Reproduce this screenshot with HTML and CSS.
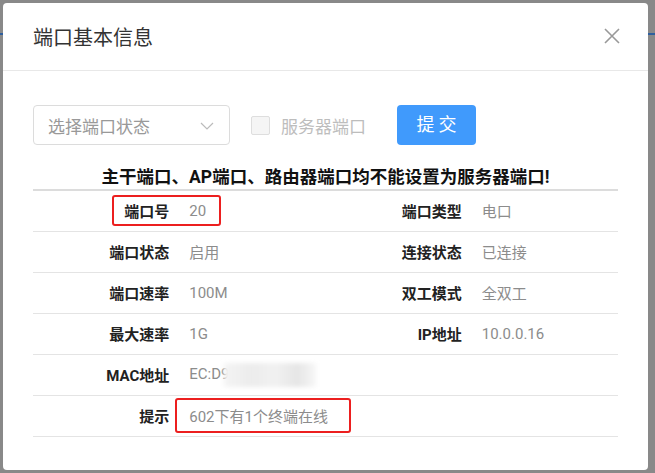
FILE: index.html
```html
<!doctype html>
<html lang="zh-CN">
<head>
    <meta charset="UTF-8">
    <title>端口基本信息</title>
    <link rel="stylesheet" href="styles.css">
</head>
<body>
<div class="page-bg">
    <span class="bg-line bg-line-l"></span>
    <span class="bg-line bg-line-r"></span>
</div>

<!--端口信息弹窗-->
<div class="modal">
    <div class="modal-head">
        <h3 class="modal-title">端口基本信息</h3>
        <a href="javascript:;" class="modal-close">
            <svg width="16" height="16" viewBox="0 0 16 16">
                <path d="M1 1L15 15M15 1L1 15" stroke="#999" stroke-width="1.6" fill="none"/>
            </svg>
        </a>
    </div>
    <div class="modal-body">
        <div class="toolbar">
            <div class="select">
                <span class="select-text">选择端口状态</span>
                <svg class="select-arrow" width="14" height="8" viewBox="0 0 14 8">
                    <path d="M1 1L7 7L13 1" stroke="#bbb" stroke-width="1.2" fill="none"/>
                </svg>
            </div>
            <label class="check disabled">
                <span class="check-box"></span>
                <span class="check-text">服务器端口</span>
            </label>
            <a href="javascript:;" class="btn-submit">提交</a>
        </div>

        <p class="warn">主干端口、AP端口、路由器端口均不能设置为服务器端口!</p>

        <div class="info-wrap">
            <table class="info">
                <tr>
                    <th>端口号</th>
                    <td>20</td>
                    <th>端口类型</th>
                    <td>电口</td>
                </tr>
                <tr>
                    <th>端口状态</th>
                    <td>启用</td>
                    <th>连接状态</th>
                    <td>已连接</td>
                </tr>
                <tr>
                    <th>端口速率</th>
                    <td>100M</td>
                    <th>双工模式</th>
                    <td>全双工</td>
                </tr>
                <tr>
                    <th>最大速率</th>
                    <td>1G</td>
                    <th>IP地址</th>
                    <td>10.0.0.16</td>
                </tr>
                <tr>
                    <th>MAC地址</th>
                    <td class="mac">EC:D9<span class="mosaic"></span></td>
                    <th></th>
                    <td></td>
                </tr>
                <tr>
                    <th>提示</th>
                    <td colspan="3">602下有1个终端在线</td>
                </tr>
            </table>
            <!--标注框-->
            <span class="mark mark1"></span>
            <span class="mark mark2"></span>
        </div>
    </div>
</div>
</body>
</html>
```

FILE: styles.css
```css
html, body, p, h3 {
    margin: 0;
    padding: 0;
}

a {
    text-decoration: none;
}

body {
    width: 655px;
    height: 473px;
    overflow: hidden;
    background-color: #898989;
    font-family: Roboto, "Noto Sans CJK SC", sans-serif;
    color: #333;
    position: relative;
}

.page-bg .bg-line {
    position: absolute;
    top: 33px;
    width: 3px;
    height: 2px;
    background-color: #2f5f9e;
}

.page-bg .bg-line-l {
    left: 0;
}

.page-bg .bg-line-r {
    right: 0;
    width: 7px;
}

.modal {
    position: relative;
    margin: 3px 0 0 3px;
    width: 645px;
    height: 467px;
    background-color: #fff;
    border-radius: 4px;
}

.modal-head {
    height: 67px;
    padding: 0 28px 0 30px;
    border-bottom: 1px solid #e8e8e8;
    display: flex;
    align-items: center;
    justify-content: space-between;
}

.modal-title {
    font-size: 20px;
    font-weight: normal;
    color: #333;
}

.modal-close {
    display: block;
    width: 16px;
    height: 16px;
    margin-top: -2px;
}

.modal-body {
    padding: 34px 30px 0 30px;
}

.toolbar {
    display: flex;
    align-items: center;
    height: 40px;
}

.select {
    width: 197px;
    height: 40px;
    box-sizing: border-box;
    border: 1px solid #dcdcdc;
    border-radius: 4px;
    padding: 0 15px 0 14px;
    display: flex;
    align-items: center;
    justify-content: space-between;
}

.select-text {
    font-size: 17px;
    color: #999;
}

.select-arrow {
    margin-top: 1px;
}

.check {
    display: flex;
    align-items: center;
    margin-left: 21px;
}

.check-box {
    width: 19px;
    height: 19px;
    box-sizing: border-box;
    border: 1px solid #dedede;
    border-radius: 2px;
    background-color: #f5f5f5;
}

.check-text {
    margin-left: 11px;
    font-size: 17px;
    color: #bdbdbd;
}

.btn-submit {
    margin-left: 31px;
    width: 79px;
    height: 40px;
    line-height: 40px;
    border-radius: 4px;
    background-color: #409afc;
    color: #fff;
    font-size: 18px;
    letter-spacing: 4px;
    text-indent: 4px;
    text-align: center;
}

.warn {
    margin-top: 20px;
    line-height: 24px;
    text-align: center;
    font-size: 17.5px;
    font-weight: bold;
    color: #111;
}

.info-wrap {
    position: relative;
}

.info {
    width: 585px;
    border-collapse: collapse;
    border-top: 2px solid #dcdcdc;
    table-layout: fixed;
    font-size: 15px;
}

.info tr {
    height: 41px;
    border-bottom: 1px solid #e4e4e4;
}

.info th {
    width: 25%;
    padding: 0 10px 0 0;
    text-align: right;
    font-weight: bold;
    color: #222;
}

.info td {
    width: 25%;
    padding: 0 0 0 10px;
    text-align: left;
    color: #8c8c8c;
    white-space: nowrap;
}

.mac .mosaic {
    display: inline-block;
    vertical-align: middle;
    width: 92px;
    height: 24px;
    margin-left: -5px;
    background: linear-gradient(90deg, #f4f4f4 0, #ececec 30%, #f1f1f1 55%, #e6e6e6 80%, #f7f7f7 100%);
    filter: blur(2px);
}

.mark {
    position: absolute;
    border: 2px solid #ec1f1f;
    border-radius: 3px;
}

.mark1 {
    left: 79px;
    top: 6px;
    width: 105px;
    height: 27px;
}

.mark2 {
    left: 142px;
    top: 209px;
    width: 172px;
    height: 31px;
}
```
